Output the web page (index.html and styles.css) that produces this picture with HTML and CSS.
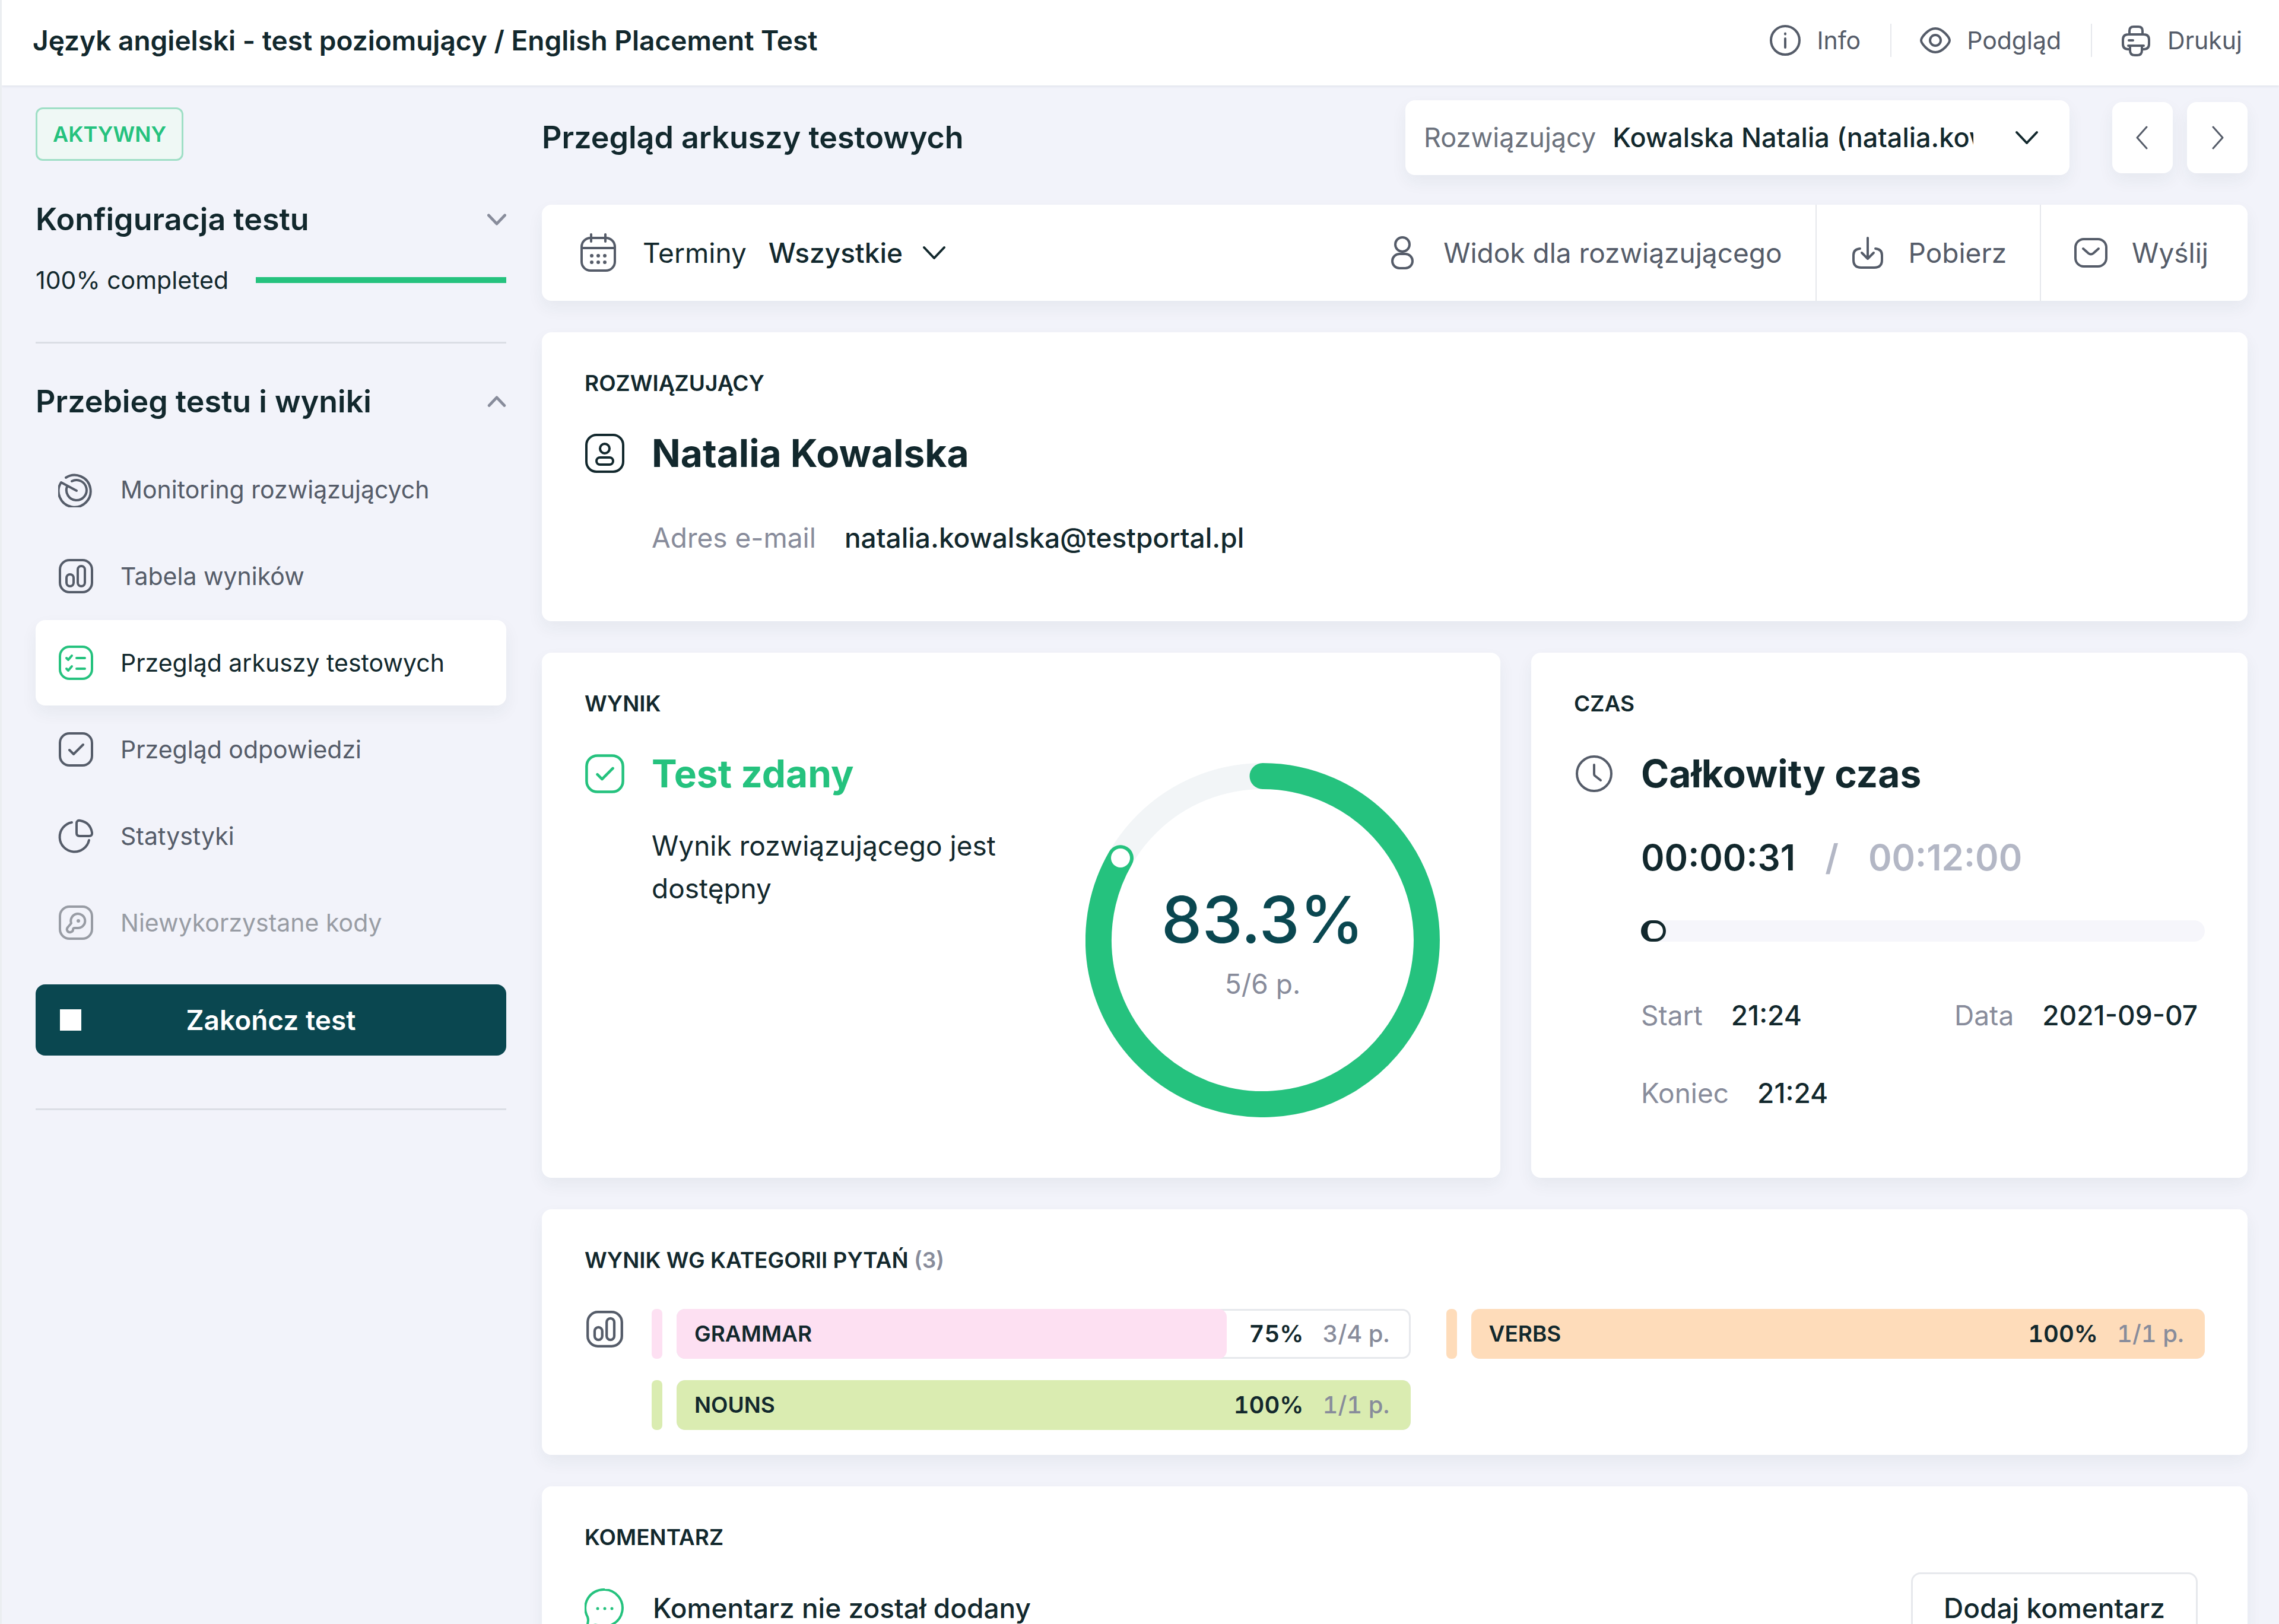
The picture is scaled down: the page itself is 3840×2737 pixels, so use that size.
FILE: index.html
```
<!DOCTYPE html>
<html lang="pl">
<head>
<meta charset="utf-8">
<title>Przegląd arkuszy testowych</title>
<link rel="stylesheet" href="styles.css">
</head>
<body>
<svg class="sprite" aria-hidden="true">
  <symbol id="i-info" viewBox="0 0 56 56"><circle cx="28" cy="28" r="24"/><path d="M28 25v15M28 16.500v1"/></symbol>
  <symbol id="i-eye" viewBox="0 0 56 56"><path d="M4 28c0-4 11-20 24-20s24 16 24 20-11 20-24 20S4 32 4 28z"/><circle cx="28" cy="28" r="9"/></symbol>
  <symbol id="i-print" viewBox="0 0 56 56"><path d="M17 18V12q0-7 7-7h8q7 0 7 7v6M17 43h-2q-9 0-9-9v-7q0-9 9-9h26q9 0 9 9v7q0 9-9 9h-2M15 37h26M18 37v8q0 8 8 8h4q8 0 8-8v-8M16 28h7"/></symbol>
  <symbol id="i-down" viewBox="0 0 40 40"><path d="M3 11l17 18 17-18"/></symbol>
  <symbol id="i-up" viewBox="0 0 40 40"><path d="M4 28l16-17 16 17"/></symbol>
  <symbol id="i-left" viewBox="0 0 40 40"><path d="M27 2L11 20l16 18"/></symbol>
  <symbol id="i-right" viewBox="0 0 40 40"><path d="M13 2l16 18-16 18"/></symbol>
  <symbol id="i-radar" viewBox="0 0 60 60"><path d="M13 10A27 27 0 1 1 5 18L31 32M23 16A17 17 0 1 1 15 25"/></symbol>
  <symbol id="i-chart" viewBox="0 0 60 60"><rect x="3" y="3" width="54" height="54" rx="16"/><rect x="14" y="27" width="12" height="20" rx="6"/><rect x="33" y="13" width="12" height="34" rx="6"/></symbol>
  <symbol id="i-list" viewBox="0 0 60 60"><rect x="3" y="3" width="54" height="54" rx="16"/><path d="M14 22l3 3 6-7M31 22h14M14 40l3 3 6-7M31 40h14"/></symbol>
  <symbol id="i-check" viewBox="0 0 60 60"><rect x="3" y="3" width="54" height="54" rx="16"/><path d="M19 31l7 7 16-16"/></symbol>
  <symbol id="i-pie" viewBox="0 0 60 60"><path d="M23 7A25 25 0 1 0 52 37M31 9q0-6 6-5 17 3 20 20 1 6-5 6H36q-5 0-5-5z"/></symbol>
  <symbol id="i-key" viewBox="0 0 60 60"><rect x="3" y="3" width="54" height="54" rx="16"/><path d="M22 31A12 12 0 1 1 33 39h-5q-3 0-3 3t-4 4c-5 1-8-4-5-8z"/><circle class="dot" cx="34" cy="27" r="3"/></symbol>
  <symbol id="i-calendar" viewBox="0 0 68 68"><rect x="5" y="9" width="56" height="55" rx="15"/><path d="M5 26h56M21 3v12M45 3v12"/><g class="dot"><circle cx="22" cy="39" r="3"/><circle cx="33" cy="39" r="3"/><circle cx="44" cy="39" r="3"/><circle cx="22" cy="50" r="3"/><circle cx="33" cy="50" r="3"/><circle cx="44" cy="50" r="3"/></g></symbol>
  <symbol id="i-person" viewBox="0 0 60 60"><circle cx="30" cy="16" r="12"/><rect x="13" y="32" width="34" height="24" rx="12"/></symbol>
  <symbol id="i-download" viewBox="0 0 60 60"><path d="M17 23Q6 24 6 34v8q0 13 13 13h22q13 0 13-13v-8q0-10-11-11M30 5v34M20 30l10 10 10-10"/></symbol>
  <symbol id="i-mail" viewBox="0 0 60 60"><rect x="4" y="7" width="52" height="46" rx="14"/><path d="M17 23l9 8q4 3 8 0l9-8"/></symbol>
  <symbol id="i-user" viewBox="0 0 68 68"><rect x="3" y="3" width="62" height="62" rx="17"/><circle cx="34" cy="26" r="8"/><rect x="20" y="41" width="28" height="12" rx="6"/></symbol>
  <symbol id="i-clock" viewBox="0 0 68 68"><circle cx="34" cy="34" r="29"/><path d="M34 19v15q0 3 2 4l9 7"/></symbol>
  <symbol id="i-chat" viewBox="0 0 68 68"><path d="M34 3a31 31 0 1 1-12 60q-4-1-7 0l-8 2q-3 0-2-3l1-7q0-3-1-6A31 31 0 0 1 34 3z"/><g class="dot"><circle cx="22" cy="35" r="2.500"/><circle cx="34" cy="35" r="2.500"/><circle cx="46" cy="35" r="2.500"/></g></symbol>
</svg>

<div class="app">
  <header class="topbar">
    <h1 class="topbar-title">Język angielski - test poziomujący / English Placement Test</h1>
    <nav class="topbar-nav">
      <a class="topbar-link" href="#info"><svg class="icon icon-56"><use href="#i-info"/></svg>Info</a>
      <a class="topbar-link" href="#podglad"><svg class="icon icon-56"><use href="#i-eye"/></svg>Podgląd</a>
      <a class="topbar-link" href="#drukuj"><svg class="icon icon-56"><use href="#i-print"/></svg>Drukuj</a>
    </nav>
  </header>

  <div class="layout">
    <aside class="sidebar">
      <span class="badge">AKTYWNY</span>
      <h2 class="side-heading first">Konfiguracja testu<svg class="icon icon-32"><use href="#i-down"/></svg></h2>
      <div class="progress"><span>100% completed</span><span class="progress-bar"></span></div>
      <hr class="rule">
      <h2 class="side-heading second">Przebieg testu i wyniki<svg class="icon icon-32"><use href="#i-up"/></svg></h2>
      <nav class="menu">
        <a class="menu-item" href="#monitoring"><svg class="icon icon-60"><use href="#i-radar"/></svg>Monitoring rozwiązujących</a>
        <a class="menu-item" href="#tabela"><svg class="icon icon-60"><use href="#i-chart"/></svg>Tabela wyników</a>
        <a class="menu-item active" href="#arkusze"><svg class="icon icon-60"><use href="#i-list"/></svg>Przegląd arkuszy testowych</a>
        <a class="menu-item" href="#odpowiedzi"><svg class="icon icon-60"><use href="#i-check"/></svg>Przegląd odpowiedzi</a>
        <a class="menu-item" href="#statystyki"><svg class="icon icon-60"><use href="#i-pie"/></svg>Statystyki</a>
        <a class="menu-item disabled" href="#kody"><svg class="icon icon-60"><use href="#i-key"/></svg>Niewykorzystane kody</a>
      </nav>
      <button class="end-test" type="button"><span class="stop"></span><span class="end-label">Zakończ test</span></button>
      <hr class="rule">
    </aside>

    <main class="main">
      <div class="page-head">
        <h2 class="page-title">Przegląd arkuszy testowych</h2>
        <div class="picker">
          <label class="picker-label" for="solver">Rozwiązujący</label>
          <select class="picker-select" id="solver"><option>Kowalska Natalia (natalia.kowalska@testportal.pl)</option></select>
          <svg class="icon icon-40"><use href="#i-down"/></svg>
        </div>
        <div class="pager">
          <button class="pager-btn" type="button" aria-label="Poprzedni"><svg class="icon icon-40 thin"><use href="#i-left"/></svg></button>
          <button class="pager-btn" type="button" aria-label="Następny"><svg class="icon icon-40 thin"><use href="#i-right"/></svg></button>
        </div>
      </div>

      <div class="toolbar">
        <div class="terms">
          <svg class="icon icon-68"><use href="#i-calendar"/></svg>
          <label class="terms-label" for="terms">Terminy</label>
          <select class="terms-select" id="terms"><option>Wszystkie</option></select>
          <svg class="icon icon-40 dark"><use href="#i-down"/></svg>
        </div>
        <button class="tool" type="button"><svg class="icon icon-60"><use href="#i-person"/></svg>Widok dla rozwiązującego</button>
        <button class="tool" type="button"><svg class="icon icon-60"><use href="#i-download"/></svg>Pobierz</button>
        <button class="tool" type="button"><svg class="icon icon-60"><use href="#i-mail"/></svg>Wyślij</button>
      </div>

      <section class="card solver">
        <h3 class="card-label">ROZWIĄZUJĄCY</h3>
        <div class="card-body">
          <svg class="icon icon-68 dark"><use href="#i-user"/></svg>
          <div class="card-text">
            <p class="card-title">Natalia Kowalska</p>
            <dl class="pair email"><dt>Adres e-mail</dt><dd>natalia.kowalska@testportal.pl</dd></dl>
          </div>
        </div>
      </section>

      <div class="split">
        <section class="card result">
          <h3 class="card-label">WYNIK</h3>
          <div class="card-body">
            <svg class="icon icon-68 green"><use href="#i-check"/></svg>
            <div class="card-text">
              <p class="card-title green">Test zdany</p>
              <p class="result-text">Wynik rozwiązującego jest dostępny</p>
            </div>
            <div class="ring">
              <svg class="ring-svg" viewBox="0 0 597 597">
                <circle class="ring-track" cx="298.500" cy="298.500" r="276.500"/>
                <path class="ring-value" d="M298.500 22A276.500 276.500 0 1 1 59 160.200"/>
                <circle class="ring-knob" cx="59" cy="160" r="16"/>
              </svg>
              <div class="ring-text"><span class="ring-percent">83.3%</span><span class="ring-points">5/6 p.</span></div>
            </div>
          </div>
        </section>

        <section class="card time">
          <h3 class="card-label">CZAS</h3>
          <div class="card-body">
            <svg class="icon icon-68"><use href="#i-clock"/></svg>
            <div class="card-text">
              <p class="card-title">Całkowity czas</p>
              <p class="clock"><span>00:00:31</span><span class="clock-max">/</span><span class="clock-max">00:12:00</span></p>
              <div class="time-bar"><span class="time-knob"></span></div>
              <div class="time-row">
                <dl class="pair"><dt>Start</dt><dd>21:24</dd></dl>
                <dl class="pair"><dt>Data</dt><dd>2021-09-07</dd></dl>
              </div>
              <div class="time-row next"><dl class="pair"><dt>Koniec</dt><dd>21:24</dd></dl></div>
            </div>
          </div>
        </section>
      </div>

      <section class="card categories">
        <h3 class="card-label">WYNIK WG KATEGORII PYTAŃ <span class="count">(3)</span></h3>
        <div class="card-body">
          <svg class="icon icon-64"><use href="#i-chart"/></svg>
          <div class="category-grid">
            <div class="category pink">
              <span class="tag"></span>
              <div class="bar"><span class="fill" style="width:75%"></span><span class="name">GRAMMAR</span><b class="percent">75%</b><span class="points">3/4 p.</span></div>
            </div>
            <div class="category orange">
              <span class="tag"></span>
              <div class="bar"><span class="fill" style="width:100%"></span><span class="name">VERBS</span><b class="percent">100%</b><span class="points">1/1 p.</span></div>
            </div>
            <div class="category lime">
              <span class="tag"></span>
              <div class="bar"><span class="fill" style="width:100%"></span><span class="name">NOUNS</span><b class="percent">100%</b><span class="points">1/1 p.</span></div>
            </div>
          </div>
        </div>
      </section>

      <section class="card comment">
        <h3 class="card-label">KOMENTARZ</h3>
        <div class="card-body">
          <svg class="icon icon-68 green"><use href="#i-chat"/></svg>
          <p class="comment-text">Komentarz nie został dodany</p>
          <button class="outline-btn" type="button">Dodaj komentarz</button>
        </div>
      </section>
    </main>
  </div>
</div>
</body>
</html>
```
FILE: styles.css
```
:root {
  --ink: #12282d;
  --slate: #555c69;
  --muted: #888c9b;
  --green: #25c27e;
  --teal: #0a4750;
  --page: #f2f3fa;
  --line: #e6e8ec;
  --shadow: 0 12px 28px rgba(30, 70, 60, .06);
}

* { box-sizing: border-box; }

body {
  margin: 0;
  background: var(--page);
  color: var(--ink);
  font-family: Inter, "Liberation Sans", sans-serif;
  font-size: 46px;
  line-height: 72px;
}

h1, h2, h3, p, dl, dd { margin: 0; }
a { color: inherit; text-decoration: none; }
button, select {
  margin: 0;
  padding: 0;
  border: 0;
  background: none;
  color: inherit;
  font: inherit;
}
select { appearance: none; }

.sprite { position: absolute; width: 0; height: 0; }
.icon {
  flex: none;
  fill: none;
  stroke: currentColor;
  stroke-width: 4;
  stroke-linecap: round;
  stroke-linejoin: round;
}
.icon-32 { width: 32px; height: 32px; color: var(--muted); stroke-width: 6; }
.icon-40 { width: 40px; height: 40px; }
.icon-56 { width: 56px; height: 56px; }
.icon-60 { width: 60px; height: 60px; }
.icon-64 { width: 64px; height: 64px; margin: 2px; color: var(--slate); }
.icon-68 { width: 68px; height: 68px; color: var(--slate); }
.thin { stroke-width: 3; }
.dark { color: var(--ink); }
.green { color: var(--green); }
.dot { fill: currentColor; stroke: none; }

.app {
  height: 100vh;
  overflow: hidden;
  border-left: 3px solid #ebeef1;
}

/* Top bar */
.topbar {
  display: flex;
  align-items: center;
  justify-content: space-between;
  height: 144px;
  padding: 0 62px 8px 52px;
  background: #fff;
  box-shadow: 0 2px 4px rgba(30, 50, 70, .08);
}
.topbar-title { font-size: 46px; font-weight: 600; }
.topbar-nav { display: flex; color: var(--slate); }
.topbar-link {
  display: flex;
  align-items: center;
  gap: 25px;
  font-size: 41px;
  line-height: 56px;
}
.topbar-link + .topbar-link {
  margin-left: 50px;
  padding-left: 46px;
  border-left: 2px solid var(--line);
}

/* Columns */
.layout {
  display: grid;
  grid-template-columns: 793px minmax(0, 1fr);
  column-gap: 60px;
  padding: 0 53px 0 57px;
}

/* Sidebar */
.sidebar { padding-top: 37px; }
.badge {
  display: block;
  width: fit-content;
  padding: 0 26px;
  border: 3px solid #9fdfc6;
  border-radius: 12px;
  background: #eff8f5;
  color: var(--green);
  font-size: 36px;
  font-weight: 600;
  line-height: 84px;
}
.side-heading {
  display: flex;
  align-items: center;
  justify-content: space-between;
  font-size: 52px;
  font-weight: 600;
  line-height: 64px;
}
.side-heading.first { margin-top: 67px; }
.side-heading.second { margin-top: 66px; }
.progress {
  display: flex;
  align-items: center;
  gap: 46px;
  margin: 46px 0 80px;
  font-size: 41px;
  line-height: 48px;
}
.progress-bar { flex: 1; height: 10px; background: var(--green); }
.rule { margin: 0; border: 0; border-top: 3px solid #dbdee5; }
.menu {
  display: grid;
  gap: 2px;
  margin-top: 44px;
  color: var(--slate);
  font-size: 41px;
}
.menu-item {
  display: flex;
  align-items: center;
  gap: 45px;
  height: 144px;
  padding-left: 38px;
  border-radius: 16px;
}
.menu-item.active {
  background: #fff;
  color: var(--ink);
  box-shadow: var(--shadow);
}
.menu-item.active .icon { color: var(--green); }
.menu-item.disabled { color: #989ca4; }
.end-test {
  display: flex;
  align-items: center;
  width: 100%;
  height: 120px;
  margin: 32px 0 89px;
  padding: 0 41px;
  border-radius: 16px;
  background: var(--teal);
  color: #fff;
  font-weight: 600;
}
.stop { width: 36px; height: 36px; background: #fff; }
.end-label { flex: 1; padding-right: 36px; text-align: center; }

/* Page heading row */
.main { padding-top: 25px; }
.page-head {
  display: flex;
  align-items: center;
  height: 126px;
  margin-bottom: 50px;
}
.page-title {
  flex: 1;
  font-size: 52px;
  font-weight: 600;
}
.picker {
  display: flex;
  align-items: center;
  width: 1119px;
  height: 126px;
  padding: 0 52px 0 31px;
  border-radius: 16px;
  background: #fff;
  box-shadow: var(--shadow);
  font-size: 45px;
}
.picker-label { color: #6c727d; }
.picker-select {
  flex: 1;
  width: 0;
  margin: 0 70px 0 28px;
  font-weight: 500;
}
.pager { display: flex; gap: 24px; margin-left: 72px; }
.pager-btn {
  display: grid;
  place-items: center;
  width: 102px;
  height: 120px;
  border-radius: 16px;
  background: #fff;
  color: var(--slate);
  box-shadow: var(--shadow);
}

/* Toolbar */
.toolbar {
  display: flex;
  height: 162px;
  margin-bottom: 53px;
  border-radius: 16px;
  background: #fff;
  box-shadow: var(--shadow);
}
.terms {
  display: flex;
  flex: 1;
  align-items: center;
  padding-left: 62px;
}
.terms-label { margin: 0 37px 0 40px; }
.terms-select { margin-right: 32px; font-weight: 500; }
.tool {
  display: flex;
  align-items: center;
  gap: 39px;
  padding: 0 56px;
  color: var(--slate);
}
.tool + .tool { border-left: 2px solid var(--line); }
.tool:last-child { padding: 0 66px 0 54px; }

/* Cards */
.card {
  margin-bottom: 53px;
  padding: 62px 72px;
  border-radius: 16px;
  background: #fff;
  box-shadow: var(--shadow);
}
.card-label {
  margin-bottom: 60px;
  font-size: 37px;
  font-weight: 600;
  line-height: 48px;
}
.card-body { display: flex; align-items: flex-start; }
.card-text { flex: 1; margin-left: 45px; }
.card-title {
  font-size: 64px;
  font-weight: 700;
  line-height: 68px;
}
.pair { display: flex; gap: 48px; }
.pair dt { color: var(--muted); }
.pair dd { font-weight: 500; }
.solver { padding-bottom: 105px; }
.email { margin-top: 72px; }

.split {
  display: grid;
  grid-template-columns: 1615fr 1207fr;
  gap: 52px;
  margin-bottom: 53px;
}
.split .card { margin-bottom: 0; }

/* Result */
.result { padding-right: 102px; padding-bottom: 102px; }
.result-text { margin-top: 51px; }
.ring {
  display: grid;
  flex: none;
  width: 597px;
  margin: 16px 0 0 100px;
}
.ring-svg, .ring-text { grid-area: 1 / 1; }
.ring-svg { width: 597px; height: 597px; fill: none; }
.ring-track { stroke: #f2f5f7; stroke-width: 44; }
.ring-value { stroke: var(--green); stroke-width: 44; stroke-linecap: round; }
.ring-knob { fill: #fff; }
.ring-text {
  display: grid;
  align-content: center;
  justify-items: center;
}
.ring-percent {
  color: var(--teal);
  font-size: 109px;
  font-weight: 500;
  line-height: 146px;
}
.ring-points { color: var(--muted); }

/* Time */
.clock {
  display: flex;
  gap: 50px;
  margin: 71px 0 70px;
  font-size: 60px;
  font-weight: 600;
}
.clock-max { color: #b3b7c5; }
.time-bar {
  height: 36px;
  margin-bottom: 88px;
  border-radius: 18px;
  background: #f6f6fb;
}
.time-knob {
  display: block;
  width: 42px;
  height: 36px;
  border: 5px solid var(--ink);
  border-left-width: 11px;
  border-radius: 18px;
  background: #fff;
}
.time-row { display: flex; justify-content: space-between; padding-right: 12px; }
.time-row.next { margin-top: 59px; }

/* Categories */
.categories { padding-bottom: 42px; }
.categories .card-label { margin-bottom: 58px; }
.count { color: var(--muted); }
.category-grid {
  display: grid;
  flex: 1;
  grid-template-columns: 1fr 1fr;
  gap: 36px 60px;
  margin-left: 45px;
}
.category { display: flex; gap: 24px; height: 84px; }
.tag { width: 18px; border-radius: 8px; background: var(--tone); }
.bar {
  display: grid;
  flex: 1;
  grid-template-columns: 1fr auto 148px;
  align-items: center;
  overflow: hidden;
  border-radius: 14px;
  box-shadow: inset 0 0 0 3px var(--line);
  font-variant-numeric: tabular-nums;
}
.fill {
  grid-area: 1 / 1 / 2 / 4;
  height: 84px;
  border-radius: 14px;
  background: var(--tone);
}
.name, .percent, .points { grid-row: 1; }
.name { grid-column: 1; padding-left: 30px; font-size: 37px; font-weight: 600; }
.percent { grid-column: 2; padding-right: 32px; font-size: 40px; font-weight: 600; }
.points { grid-column: 3; color: var(--muted); font-size: 40px; font-weight: 500; }
.pink { --tone: #fde0f2; }
.orange { --tone: #fedcba; }
.lime { --tone: #daecb1; }

/* Comment */
.comment .card-label { margin-bottom: 35px; }
.comment .card-body { align-items: center; }
.comment-text { flex: 1; margin-left: 47px; font-weight: 500; }
.outline-btn {
  height: 120px;
  margin-right: 12px;
  padding: 0 52px;
  border: 3px solid var(--line);
  border-radius: 16px;
  font-weight: 500;
}
```
